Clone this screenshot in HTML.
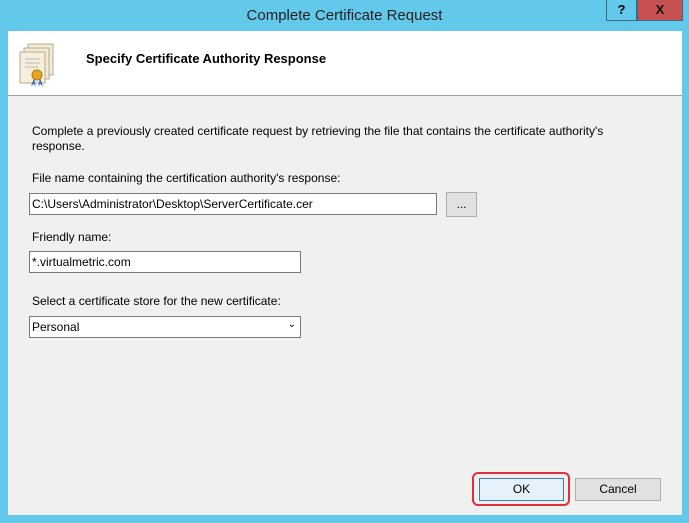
<!DOCTYPE html>
<html><head><style>
body{margin:0;width:689px;height:523px;background:#63c9ea;position:relative;overflow:hidden;font-family:"Liberation Sans",sans-serif;font-size:12px;color:#000}
.t{position:absolute;left:0;right:0;top:7px;text-align:center;font-size:15px;color:#222}
.help{position:absolute;left:606px;top:0;width:31px;height:21px;border:1px solid #3d6a7a;border-top:0;box-sizing:border-box;text-align:center;font-weight:bold;font-size:13px;line-height:20px;background:#63c9ea}
.cls{position:absolute;left:637px;top:0;width:46px;height:21px;background:#c75050;border:1px solid #3d6a7a;border-top:0;box-sizing:border-box;text-align:center;color:#111;font-weight:bold;font-size:13px;line-height:20px}
.client{position:absolute;left:8px;top:31px;width:674px;height:484px;background:#f0f0f0}
.hdr{position:absolute;left:0;top:0;width:674px;height:64px;background:#fff;border-bottom:1px solid #a0a0a0}
.a{position:absolute}
input,.in{position:absolute;height:22px;border:1px solid #7a7a7a;background:#fff;box-sizing:border-box;padding:3px 2px;font-size:12px;font-family:"Liberation Sans",sans-serif}
.btn{position:absolute;border:1px solid #adadad;background:#e1e1e1;box-sizing:border-box;text-align:center;font-size:12px}
</style></head><body>
<div class="t">Complete Certificate Request</div>
<div class="help">?</div><div class="cls">X</div>
<div class="client">
<div class="hdr">
<svg class="a" style="left:8px;top:11px" width="44" height="46">
<rect x="12" y="2" width="25" height="31" fill="#f3ead8" stroke="#b9a98a"/>
<rect x="8" y="6" width="25" height="31" fill="#f3ead8" stroke="#b9a98a"/>
<rect x="4" y="10" width="25" height="31" fill="#f6eedd" stroke="#b9a98a"/>
<line x1="9" y1="17" x2="24" y2="17" stroke="#bbb"/><line x1="9" y1="21" x2="24" y2="21" stroke="#bbb"/><line x1="9" y1="25" x2="22" y2="25" stroke="#bbb"/>
<path d="M18 36 l-3 8 l3-2 l2 3z M24 36 l3 8 l-3-2 l-2 3z" fill="#3a6fc8"/>
<circle cx="21" cy="33" r="5" fill="#e2a820" stroke="#b07a10"/>
</svg>
<div class="a" style="left:78px;top:20px;font-weight:bold;font-size:13px">Specify Certificate Authority Response</div>
</div>
<div class="a" style="left:24px;top:93px;width:600px;line-height:15px">Complete a previously created certificate request by retrieving the file that contains the certificate authority's response.</div>
<div class="a" style="left:24px;top:140px">File name containing the certification authority's response:</div>
<div class="in" style="left:21px;top:162px;width:408px">C:\Users\Administrator\Desktop\ServerCertificate.cer</div>
<div class="btn" style="left:438px;top:161px;width:31px;height:25px;line-height:22px">...</div>
<div class="a" style="left:24px;top:199px">Friendly name:</div>
<div class="in" style="left:21px;top:220px;width:272px">*.virtualmetric.com</div>
<div class="a" style="left:24px;top:263px">Select a certificate store for the new certificate:</div>
<div class="in" style="left:21px;top:285px;width:272px">Personal<span style="position:absolute;right:4px;top:2px;font-size:10px">&#8964;</span></div>
<div class="a" style="left:464px;top:441px;width:98px;height:34px;border:2px solid #e0303a;border-radius:6px;box-sizing:border-box"></div>
<div class="btn" style="left:471px;top:447px;width:85px;height:23px;line-height:21px;border-color:#3c7fb1;background:#e5f1fb">OK</div>
<div class="btn" style="left:567px;top:447px;width:86px;height:23px;line-height:21px">Cancel</div>
</div>
</body></html>
